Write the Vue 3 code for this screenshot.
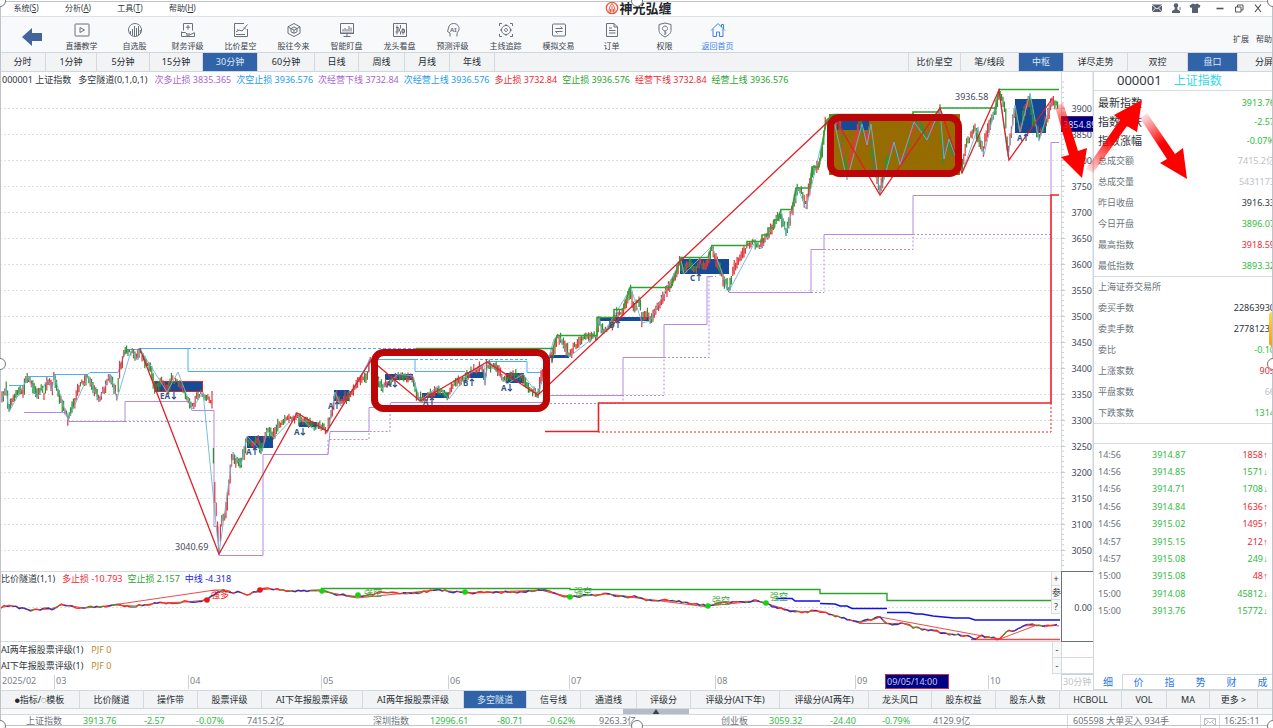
<script setup>
const menus = [['系统', 'S'], ['分析', 'A'], ['工具', 'T'], ['帮助', 'H']]

const tools = [
  { label: '直播教学', d: 'M1.5 2h13q.5 0 .5.5v11q0 .5-.5.5h-13q-.5 0-.5-.5v-11q0-.5.5-.5zM6 5.5v5l4.500-2.500z' },
  { label: '自选股', d: 'M8 1.500a6.500 6.500 0 1 0 .01 0M3.500 9v3M5.500 7v6.500M7.500 4v10M9.500 6v8M11.500 4v9M13.300 8v3.500' },
  { label: '财务评级', d: 'M3.500 8.500V1.500h9v7M8 3v4.500M5.800 5.200h4.400M1.500 9.500v5M1.500 14.500h13v-4M2 10.500h3.500l1.500 1.500h3M6 13l3 .3 5-2.500' },
  { label: '比价星空', d: 'M11 1.500H1.500v13h13V7M3 10l3-2 3 1 5.500-6.500M3 12.500h9M4 7.500l1.500 1M11 5.500l2 2' },
  { label: '股往今来', d: 'M8 1.500l6 3.300v6.500L8 14.500l-6-3.200V4.800zM8 5l3 1.600v3.200L8 11.300 5 9.800V6.600zM5 6.600l3 1.600 3-1.600M8 8.200v3M2 4.800l3 1.800M14 4.800l-3 1.800' },
  { label: '智能盯盘', d: 'M1.500 1.500h13v10h-13zM1.500 11h13M4.500 14.500h7M8 12v2.500M4 7v2.500M6 6v3.500M8 7v2.500M10 4v5.500M12 5.500v4' },
  { label: '龙头看盘', d: 'M1.500 1.500h13v13h-13zM5 3.500v9M4 5.500h2.500M6 5v5.500M8.500 3v3l-1.500 2 1.500 2v2.500M11 6v6.500M10 7.500h2.500v3H10zM3.500 10h2' },
  { label: '预测评级', d: 'M5 14.500v-3.500l-2.500-1.500L3.500 6C4 3 6 1.500 8.500 1.500c4 0 6 3 5.500 6-.3 2-2 3-2 4v3', text: 'AI' },
  { label: '主线追踪', d: 'M1.500 4V1.500H4M12 1.500h2.500V4M14.500 12v2.500H12M4 14.500H1.500V12M8 3.500a4.500 4.500 0 1 0 .01 0M8 6.500a1.500 1.500 0 1 0 .01 0M8 2v1.500M8 12.500V14M2 8h1.500M12.500 8H14' },
  { label: '模拟交易', d: 'M2.500 2h11q1 0 1 1v10q0 1-1 1h-11q-1 0-1-1V3q0-1 1-1zM4.500 6.500h7l-2-2M11.500 9.500h-7l2 2' },
  { label: '订单', d: 'M2.500 1.500h7.500l3.500 3.500v9.500h-11zM10 1.500V5h3.500M5 6h3M5 8.500h6.500M5 11h6.500' },
  { label: '权限', d: 'M8 1l6 1.500v6c0 3-3 5-6 6.500-3-1.500-6-3.500-6-6.500v-6zM8 4a2.500 2.500 0 1 0 .01 0M8 9v4M8 11h1.500' },
  { label: '返回首页', d: 'M1 8.500l7-7 7 7M11.500 5V2.500h2V7M3 7v7.500h3.500V10h3v4.500H13V7', home: true },
]

const periods = ['分时', '1分钟', '5分钟', '15分钟', '30分钟', '60分钟', '日线', '周线', '月线', '年线']
const views = ['比价星空', '笔/线段', '中枢', '详尽走势', '双控', '盘口', '分屏']

const mainLegend = [
  ['次多止损 3835.365', 'purple'], ['次空止损 3936.576', 'blue'], ['次经营下线 3732.84', 'purple'],
  ['次经营上线 3936.576', 'blue'], ['多止损 3732.84', 'red'], ['空止损 3936.576', 'green'],
  ['经营下线 3732.84', 'red'], ['经营上线 3936.576', 'green'],
]

const levels = Array.from({ length: 18 }, (_, i) => ({ label: 3900 - i * 50, y: 108 + i * 26 }))
const ticks = Array.from({ length: 94 }, (_, i) => 82 + i * 5.2)

const price = [
  [1, 402], [6, 388], [9, 408], [17, 392], [23, 392], [26, 378], [30, 378], [37, 396], [42, 387], [44, 396], [48, 380], [52, 390], [54, 376], [58, 392], [62, 403], [68, 419], [73, 407], [80, 384], [88, 378], [93, 387], [99, 399], [105, 387], [110, 376], [117, 396], [120, 367], [125, 352], [133, 352], [137, 358], [140, 351], [145, 363], [150, 366], [155, 389], [163, 381], [167, 390], [172, 380], [177, 381], [185, 392], [192, 407], [197, 397], [202, 393], [207, 398], [212, 400], [214, 480], [217, 523], [219, 550], [222, 517], [225, 517], [228, 497], [232, 457], [235, 460], [241, 463], [247, 440], [252, 445], [257, 440], [262, 449], [267, 430], [273, 437], [280, 423], [290, 418], [297, 417], [302, 422], [308, 423], [315, 427], [322, 427], [327, 430], [333, 410], [335, 393], [340, 400], [348, 397], [353, 390], [360, 379], [367, 380], [370, 361], [375, 373], [382, 387], [390, 383], [397, 376], [412, 378], [418, 398], [428, 397], [437, 388], [448, 396], [455, 383], [467, 377], [472, 370], [482, 367], [485, 381], [487, 364], [497, 368], [505, 381], [513, 374], [522, 376], [527, 387], [538, 394], [542, 374], [547, 358], [552, 357], [557, 338], [563, 341], [569, 355], [577, 343], [583, 337], [590, 339], [597, 335], [599, 320], [603, 332], [612, 323], [617, 313], [623, 313], [630, 290], [633, 307], [640, 302], [642, 320], [647, 312], [650, 319], [662, 300], [668, 287], [675, 277], [680, 262], [683, 271], [688, 263], [694, 270], [700, 263], [705, 268], [712, 249], [717, 263], [723, 278], [729, 289], [735, 265], [748, 245], [755, 243], [760, 246], [767, 237], [774, 226], [780, 213], [786, 231], [793, 207], [797, 190], [802, 192], [806, 205], [812, 173], [817, 168], [822, 153], [825, 124], [833, 119], [840, 123], [845, 160], [847, 174], [853, 147], [860, 124], [867, 140], [869, 125], [873, 160], [880, 191], [887, 160], [893, 144], [900, 160], [907, 153], [913, 124], [920, 127], [927, 138], [933, 123], [940, 112], [943, 155], [948, 142], [957, 165], [962, 169], [967, 143], [975, 128], [983, 151], [988, 130], [995, 110], [999, 93], [1005, 107], [1008, 155], [1012, 127], [1015, 110], [1020, 130], [1029, 97], [1033, 120], [1039, 136], [1047, 120], [1051, 101], [1057, 105],
]

const swings = '1,402 6,388 9,412 28,377 37,398 48,379 52,391 54,375 68,420 88,376 99,401 110,374 117,399 131,351 138,360 140,349 167,392 178,372 192,409 203,392 219,554 233,452 241,465 247,436 262,452 267,430 274,438 296,415 315,430 319,425 328,432 335,392 341,406 348,398 370,359 382,389 398,374 413,376 420,401 438,386 449,399 467,375 484,365 485,384 488,362 507,384 523,374 538,395 554,339 559,336 569,357 597,335 599,318 603,334 631,288 642,323 650,321 681,260 684,274 712,246 729,291 755,242 761,249 781,211 786,234 798,188 806,209 827,121 833,116 847,180 862,124 867,145 871,124 880,194 894,142 900,165 914,122 927,140 940,109 944,159 949,139 962,173 978,127 984,155 999,90 1008,157 1015,105 1020,132 1030,93 1039,141 1052,99'

function noise(seed) {
  let s = seed
  return () => {
    s = (s * 16807) % 2147483647
    return s / 2147483647
  }
}
function at(points, x) {
  for (let i = 1; i < points.length; i++) {
    const [x0, y0] = points[i - 1]
    const [x1, y1] = points[i]
    if (x <= x1) return y0 + ((y1 - y0) * (x - x0)) / (x1 - x0)
  }
  return points[points.length - 1][1]
}
function candles() {
  const rnd = noise(4711)
  const out = { up: '', down: '' }
  for (let x = 2; x < 1058; x += 1.4) {
    const mid = at(price, x) + (rnd() - 0.5) * 5
    const slope = at(price, x + 1) - at(price, x - 1)
    const side = rnd() < (slope < 0 ? 0.68 : 0.38) ? 'up' : 'down'
    const len = 2 + rnd() * 8 + Math.min(Math.abs(slope), 16) * 0.7
    out[side] += `M${x.toFixed(1)} ${(mid - len / 2).toFixed(1)}v${len.toFixed(1)}`
  }
  return out
}
const bars = candles()

const hubs = [
  [247, 436, 26, 12], [299, 422, 18, 5], [334, 390, 15, 11], [385, 374, 28, 6], [422, 393, 27, 5], [467, 372, 17, 6],
  [506, 373, 18, 10], [549, 355, 20, 3], [598, 317, 51, 4], [680, 259, 49, 15], [837, 121, 32, 9], [1015, 99, 31, 34],
]
const marks = [
  ['EA', 160, 399, 0], ['A', 246, 455, 1], ['A', 294, 435, 0], ['A', 328, 409, 1], ['A', 386, 387, 0], ['A', 423, 405, 1], ['B', 463, 386, 1],
  ['A', 501, 391, 0], ['B', 609, 328, 1], ['C', 690, 281, 1], ['A', 1017, 141, 1],
]
const arrowUp = (x, y) => `M${x} ${y}v-7M${x - 2} ${y - 5}l2-2 2 2`
const arrowDown = (x, y) => `M${x} ${y - 7}v7M${x - 2} ${y - 2}l2 2 2-2`
const markArrow = (m) => {
  const x = m[1] + m[0].length * 5 + 4
  return m[3] ? arrowUp(x, m[2]) : arrowDown(x, m[2])
}

const ratio = [
  [1, 608], [9, 605], [29, 610], [51, 609], [61, 605], [72, 606], [83, 608], [100, 607], [115, 605], [135, 606], [159, 603], [186, 602], [196, 601], [206, 600], [216, 594], [225, 590], [230, 591], [233, 594], [237, 591], [247, 595], [259, 590], [270, 589], [291, 591], [321, 591], [335, 594], [362, 597], [382, 592], [406, 594], [436, 590], [473, 593], [507, 592], [520, 592], [541, 590], [570, 597], [606, 594], [634, 597], [647, 600], [675, 601], [708, 606], [727, 602], [758, 601], [766, 603], [775, 607], [795, 612], [820, 611], [837, 616], [859, 623], [870, 620], [880, 617], [888, 624], [902, 623], [913, 627], [944, 633], [968, 636], [975, 639], [981, 636], [1000, 639], [1007, 631], [1014, 631], [1023, 626], [1040, 625], [1045, 627], [1052, 625], [1059, 626],
]
function ratioSegments() {
  const rnd = noise(99)
  const out = { red: '', blue: '', green: '' }
  let y = ratio[0][1]
  for (let x = 1; x < 1057; x += 3) {
    const next = at(ratio, x + 3) + (rnd() - 0.5) * 2.8
    const r = rnd()
    const key = r < 0.42 ? 'red' : r < 0.78 ? 'blue' : 'green'
    out[key] += `M${x} ${y.toFixed(1)}L${x + 3} ${next.toFixed(1)}`
    y = next
  }
  return out
}
const segs = ratioSegments()
const ratioBase = ratio.map((p) => p.join(',')).join(' ')
const dots = [
  [207, 600, 'hot'], [260, 590, 'hot'], [322, 591, 'cool'], [358, 595, 'cool'], [465, 592, 'cool'], [570, 597, 'cool'], [708, 606, 'cool'], [766, 603, 'cool'],
]
const dotLabels = [
  ['强多', 211, 598, 'hot'], ['强空', 364, 596, 'cool'], ['强空', 574, 595, 'cool'], ['强空', 712, 604, 'cool'], ['强空', 770, 600, 'cool'],
]

const ratings = ['AI两年报股票评级(1)', 'AI下年报股票评级(1)']
const months = [['2025/02', 1], ['03', 55], ['04', 189], ['05', 322], ['06', 449], ['07', 570], ['08', 716], ['09', 856], ['10', 989]]

const headline = [['最新指数', '3913.76', 'green'], ['指数涨跌', '-2.57', 'green'], ['指数涨幅', '-0.07%', 'green']]
const quotes = [
  ['总成交额', '7415.2亿', 'pale'], ['总成交量', '5431173', 'pale'], ['昨日收盘', '3916.33', 'dark'],
  ['今日开盘', '3896.07', 'green'], ['最高指数', '3918.59', 'red'], ['最低指数', '3893.32', 'green'],
]
const breadth = [
  ['上海证券交易所', '', 'dark'], ['委买手数', '22863930', 'dark'], ['委卖手数', '27781235', 'dark'], ['委比', '-0.10', 'green'],
  ['上涨家数', '905', 'red'], ['平盘家数', '66', 'pale'], ['下跌家数', '1314', 'green'],
]
const trades = [
  ['14:56', '3914.87', '1858', 1], ['14:56', '3914.85', '1571', 0], ['14:56', '3914.71', '1708', 0], ['14:56', '3914.84', '1636', 1],
  ['14:56', '3915.02', '1495', 1], ['14:57', '3915.15', '212', 1], ['14:57', '3915.08', '249', 0], ['15:00', '3915.08', '48', 1],
  ['15:00', '3914.08', '45812', 0], ['15:00', '3913.76', '15772', 0],
]
const sideTabs = ['细', '价', '指', '势', '财', '成']

const indicators = ['比价隧道', '操作带', '股票评级', 'AI下年报股票评级', 'AI两年报股票评级', '多空隧道', '信号线', '通道线', '评级分', '评级分(AI下年)', '评级分(AI两年)', '龙头风口', '股东权益', '股东人数', 'HCBOLL', 'VOL', 'MA', '更多 >']
const status = [
  ['上证指数', ''], ['3913.76', 'green'], ['-2.57', 'green'], ['-0.07%', 'green'], ['7415.2亿', ''],
  ['深圳指数', ''], ['12996.61', 'green'], ['-80.71', 'green'], ['-0.62%', 'green'], ['9263.3亿', ''],
  ['创业板', ''], ['3059.32', 'green'], ['-24.40', 'green'], ['-0.79%', 'green'], ['4129.9亿', ''],
]
</script>

<template>
  <div class="app">
    <header class="titlebar">
      <nav class="menus">
        <button v-for="m in menus" :key="m[1]" class="menu">{{ m[0] }}(<u>{{ m[1] }}</u>)</button>
      </nav>
      <div class="brand">
        <svg viewBox="0 0 14 14" width="14" height="14">
          <circle cx="7" cy="7" r="5.700" fill="none" stroke="#f0563f" stroke-width="1.300" />
          <path d="M7 2.500C5 5 4 7 4 10.500M7 2.500C9 5 10 7 10 10.500M7 5v6M5.500 8v3.500M8.500 8v3.500" fill="none" stroke="#f0563f" stroke-width="1" />
        </svg>
        <span>神光弘缠</span>
      </div>
      <div class="window-tools">
        <button aria-label="消息"><svg viewBox="0 0 12 12"><path d="M1 2.500h10v7.500H1z" fill="#566070" /><path d="M1 3l5 4 5-4M1 10l3.500-4M11 10L7.500 6" fill="none" stroke="#fff" stroke-width=".8" /></svg></button>
        <button aria-label="用户"><svg viewBox="0 0 12 12"><circle cx="6" cy="3.500" r="2.300" fill="#566070" /><path d="M5 5h2l.5 2.500L10 9v2H2V9l2.500-1.500z" fill="#566070" /><path d="M10 5v3" stroke="#566070" stroke-width=".8" /></svg></button>
        <button aria-label="皮肤"><svg viewBox="0 0 12 12"><path d="M4 1.500q2 1.500 4 0L11.500 3.500 10.300 6 9 5.500V11H3V5.500L1.700 6 .5 3.500z" fill="#566070" /></svg></button>
        <button aria-label="最小化" class="first-control"><svg viewBox="0 0 12 12"><path d="M2.500 6.500h7" stroke="#555" stroke-width="1.600" /></svg></button>
        <button aria-label="还原"><svg viewBox="0 0 12 12"><path d="M2.500 5h5.500v5H2.500zM4.500 5V3h5.500v5H8" fill="none" stroke="#555" /></svg></button>
        <button aria-label="关闭"><svg viewBox="0 0 12 12"><path d="M3 2.500l6 7.500M9 2.500L3 10" fill="none" stroke="#444" stroke-width="1.100" /></svg></button>
      </div>
    </header>

    <div class="toolbar">
      <button class="back" aria-label="返回">
        <svg viewBox="0 0 22 18" width="22" height="18"><path d="M1 9L11 0v5h10v8H11v5z" fill="#43659b" /></svg>
      </button>
      <button v-for="t in tools" :key="t.label" class="tool" :class="{ home: t.home }">
        <svg viewBox="0 0 16 16" width="16" height="16">
          <path :d="t.d" fill="none" stroke="currentColor" />
          <text v-if="t.text" x="5" y="9.500" font-size="6" font-weight="700" fill="currentColor">{{ t.text }}</text>
        </svg>
        <span>{{ t.label }}</span>
      </button>
      <div class="extras"><button>扩展</button><button>帮助</button></div>
    </div>

    <div class="periodbar">
      <button v-for="p in periods" :key="p" class="tab" :class="{ active: p === '30分钟' }">{{ p }}</button>
      <span class="gap"></span>
      <button v-for="v in views" :key="v" class="tab" :class="{ active: v === '中枢' || v === '盘口' }">{{ v }}</button>
    </div>

    <main class="main">
      <section class="charts">
        <div class="plot">
          <div class="legend">
            <span>000001 上证指数</span><span class="name">多空隧道(0,1,0,1)</span>
            <span v-for="l in mainLegend" :key="l[0]" :class="l[1]">{{ l[0] }}</span>
          </div>
          <svg viewBox="0 72 1093 499" class="canvas">
            <g stroke="#dcdfe3" stroke-dasharray="2 2" fill="none">
              <path v-for="l in levels" :key="l.y" :d="`M0 ${l.y + 0.5}H1061`" />
            </g>
            <path d="M1061.500 72V571M1093 72V571" stroke="#d3d9de" />
            <path v-for="y in ticks" :key="y" :d="`M1062 ${y}h2`" stroke="#c4ccd2" />
            <g class="axis">
              <g v-for="l in levels" :key="l.label">
                <path :d="`M1061 ${l.y + 0.5}h4`" stroke="#c4ccd2" />
                <text x="1092" :y="l.y + 4" text-anchor="end">{{ l.label }}</text>
              </g>
            </g>
            <rect x="829" y="114" width="131" height="61" fill="#966c00" />
            <rect x="154.500" y="381.500" width="48" height="10" fill="#174a95" stroke="#e0222a" />
            <rect v-for="h in hubs" :key="h.join()" :x="h[0]" :y="h[1]" :width="h[2]" :height="h[3]" fill="#174a95" />

            <g fill="none" stroke="#b48ae0">
              <path d="M24 412.500H67L69 421.500H125V401.500H189L192 410.500H214V526.500H218L219 555.500H263V454.500H328L330 431.500H369V407.500H389L391 402.500H546M546 395.500H623V357.500H664V324.500H707V276.500H712M723 280L729 292.500H811V249.500H824V234.500H913V195.500H1051V142.500H1059" />
              <path stroke-dasharray="2 2" d="M125 421.500H213M328 454V439.500H369V431.500H390V403.500M546 403.500H623V395.500H664V357.500H709V276.500H716M811 292.500H824V249.500H913V234.500H1051" />
            </g>
            <g fill="none" stroke="#4aaef8">
              <path d="M9 385.500H24L28 376.500H53L54 374.500H88L90 372.500H118L126 349.500H140V348.500H188V371.500H369V359.500H415V371.500H465M487 361.500H527V372.500H541" />
              <path stroke-dasharray="3 2" d="M188 348.500H416M415 359.500H527" />
            </g>
            <path :d="bars.up" stroke="#e03a3c" stroke-width="1.200" />
            <path :d="bars.down" stroke="#2f9134" stroke-width="1.200" />
            <polyline :points="swings" fill="none" stroke="#6cb4d8" stroke-width=".9" />
            <g fill="none" stroke="#2da32d" stroke-width="1.600">
              <path d="M416 348.500H553L557 335.500H597V317.500H614V309.500H623L630 287.500H671L681 257.500H708L712 245.500H747V241.500H762V235H768V228H774V220H778L781 209.500H792L796 188H810L812 167H819L826 121L833 114.500H913V112H938L940 108H996L999 89.500H1059" />
            </g>
            <g fill="none" stroke="#ee2027">
              <path stroke-width="1.600" d="M545 431.500H598.500V403H1051V195H1059" />
              <path stroke-dasharray="2 2" d="M598 432H1051V403" />
            </g>
            <polyline fill="none" stroke="#e01f26" stroke-width="1.300" points="140,349 219,554 297,413 327,431 371,360 420,401 487,362 538,395 833,117 837,122 880,195 940,108 962,173 999,90 1009,160 1052,99" />
            <g class="mark">
              <template v-for="m in marks" :key="m.join()">
                <text :x="m[1]" :y="m[2]">{{ m[0] }}</text>
                <path :d="markArrow(m)" fill="none" stroke="#33558c" stroke-width="1.200" />
              </template>
              <path d="M552 363v-7M550 358l2-2 2 2" fill="none" stroke="#33558c" stroke-width="1.200" />
            </g>
            <g class="axis">
              <text x="175" y="550">3040.69</text>
              <text x="955" y="100">3936.58</text>
              <rect x="1061.500" y="116.500" width="32" height="15" fill="#000084" stroke="#5b2460" />
              <text x="1063" y="128" class="cursor-price">3854.89</text>
            </g>
            <g fill="none" stroke="#bd0505" stroke-width="7">
              <rect x="374.500" y="352.500" width="172" height="56" rx="9" />
              <rect x="830.500" y="117.500" width="128" height="56" rx="9" />
            </g>
          </svg>
        </div>

        <div class="plot ratio">
          <div class="legend">
            <span class="name">比价隧道(1,1)</span><span class="red">多止损 -10.793</span><span class="green">空止损 2.157</span><span class="navy">中线 -4.318</span>
          </div>
          <svg viewBox="0 571 1093 71" class="canvas">
            <path d="M0 571.500H1061M0 641.500H1061" stroke="#d3d9de" />
            <path d="M0 607.500H1061" stroke="#dcdfe3" stroke-dasharray="2 2" />
            <rect x="1061.500" y="571.500" width="33" height="70" fill="none" stroke="#69717d" />
            <text x="1092" y="611" text-anchor="end" class="axis-zero">0.00</text>
            <g fill="none" stroke="#f04a4a">
              <path d="M99 607L215 590L225 590M322 591L357 598L436 590M465 593L541 590L570 598M606 594L708 607M708 606L758 601L795 612M870 621L880 617L999 639M859 623.500H892M1000 639L1037 625" />
              <path stroke-width="1.600" d="M971 639.500H1060" />
              <polyline :points="ratioBase" />
            </g>
            <g fill="none" stroke-width="1.400">
              <path :d="segs.red" stroke="#ee3028" />
              <path :d="segs.blue" stroke="#3432b0" />
              <path :d="segs.green" stroke="#5e8232" />
              <path d="M321 588.500H570V589.500H820V593.500H887V600.500H1060" stroke="#2da32d" />
              <path stroke="#1010f0" stroke-width="1.600" d="M776 598.500H792L795 601H820M820 603.500L835 604L840 606H847L852 608.500H887M887 612.500H909L916 614H922L933 616L954 618H969L975 620H1060" />
            </g>
            <g v-for="d in dots" :key="d[0]" :class="d[2]"><circle :cx="d[0]" :cy="d[1]" r="2.800" /></g>
            <text v-for="d in dotLabels" :key="d[1]" :x="d[1]" :y="d[2]" class="dot-label" :class="d[3]">{{ d[0] }}</text>
          </svg>
          <div class="panel-buttons"><button>+</button><button>参</button><button>?</button></div>
        </div>

        <div v-for="r in ratings" :key="r" class="rating">
          <span>{{ r }}</span><span class="gold">PJF 0</span>
          <button class="collapse">-</button><i></i>
        </div>

        <div class="dates">
          <svg viewBox="0 674 1093 16" class="canvas">
            <g class="month">
              <template v-for="(m, i) in months" :key="m[0]">
                <path v-if="i" :d="`M${m[1] - 0.5} 675v14`" stroke="#ccd3d8" />
                <text :x="m[1] + 1" y="684">{{ m[0] }}</text>
              </template>
            </g>
            <rect x="885.500" y="674.500" width="63" height="14" fill="#000084" stroke="#c03048" />
            <text x="887" y="685" class="picked">09/05/14:00</text>
            <path d="M1061.500 674V690M1061 674.500h32" stroke="#ccd3d8" />
            <text x="1063" y="685" class="interval">30分钟</text>
          </svg>
        </div>
      </section>

      <aside class="quote">
        <h2><span>000001</span><span class="title">上证指数</span></h2>
        <dl class="headline">
          <div v-for="q in headline" :key="q[0]"><dt>{{ q[0] }}</dt><dd :class="q[2]">{{ q[1] }}</dd></div>
        </dl>
        <dl class="rows">
          <div v-for="q in quotes" :key="q[0]"><dt>{{ q[0] }}</dt><dd :class="q[2]">{{ q[1] }}</dd></div>
        </dl>
        <dl class="rows ruled">
          <div v-for="q in breadth" :key="q[0]"><dt>{{ q[0] }}</dt><dd :class="q[2]">{{ q[1] }}</dd></div>
        </dl>
        <div class="spacer-row"></div>
        <table class="trades">
          <tbody>
            <tr v-for="(t, i) in trades" :key="i">
              <td>{{ t[0] }}</td><td class="green">{{ t[1] }}</td>
              <td :class="t[3] ? 'red' : 'green'">{{ t[2] }}<span class="dir">{{ t[3] ? '↑' : '↓' }}</span></td>
            </tr>
          </tbody>
        </table>
        <div class="side-tabs">
          <button v-for="s in sideTabs" :key="s">{{ s }}</button>
        </div>
        <span class="side-handle"></span>
      </aside>

      <svg class="trend-arrows" viewBox="1050 90 150 100" width="150" height="100">
        <defs>
          <linearGradient id="fade-a" gradientUnits="userSpaceOnUse" x1="1058" y1="102" x2="1073" y2="150"><stop offset="0" stop-color="#f00" stop-opacity=".15" /><stop offset=".6" stop-color="#f00" /></linearGradient>
          <linearGradient id="fade-b" gradientUnits="userSpaceOnUse" x1="1089" y1="172" x2="1122" y2="124"><stop offset="0" stop-color="#f00" stop-opacity=".1" /><stop offset=".7" stop-color="#f00" /></linearGradient>
          <linearGradient id="fade-c" gradientUnits="userSpaceOnUse" x1="1143" y1="115" x2="1170" y2="156"><stop offset="0" stop-color="#f00" stop-opacity=".1" /><stop offset=".7" stop-color="#f00" /></linearGradient>
        </defs>
        <path d="M1055 106l8-3L1078 151l9-3-5 30-21-21 8-2z" fill="url(#fade-a)" />
        <path d="M1086 169l7 4L1127 126l10 6L1142 100l-28 15 6 5z" fill="url(#fade-b)" />
        <path d="M1140 118l7-5L1175 154l8-6 4 31-27-16 7-4z" fill="url(#fade-c)" />
      </svg>
    </main>

    <div class="indicators">
      <button class="tab"><span class="bullet">●</span>指标/<span class="bullet">○</span>模板</button>
      <button v-for="n in indicators" :key="n" class="tab" :class="{ active: n === '多空隧道' }">{{ n }}</button>
    </div>
    <div class="drawer">
      <button aria-label="展开"><svg viewBox="0 0 8 6" width="8" height="5"><path d="M4 0l4 6H0z" fill="#3c434a" /></svg></button>
    </div>
    <footer class="status">
      <div class="markets"><span v-for="(s, i) in status" :key="i" :class="s[1]">{{ s[0] }}</span></div>
      <span class="flash">605598 大单买入 934手</span>
      <span class="mail"><svg viewBox="0 0 12 8" width="12" height="8"><path d="M.5.5h11v7H.5zM.5.500L6 5 11.500.500M.5 7.500l4-4M11.500 7.500l-4-4" fill="none" stroke="#b5bdc4" /></svg></span>
      <time>16:25:11</time>
    </footer>

    <div class="frame">
      <i class="h tl"></i><i class="h tc"></i><i class="h tr"></i><i class="h ml"></i><i class="h mr"></i><i class="h bl"></i><i class="h bc"></i><i class="h br"></i>
    </div>
  </div>
</template>

<style>
body { margin: 0; background: #fff; }
</style>

<style scoped>
.app {
  position: relative;
  overflow: hidden;
  background: #fff;
  color: #30363d;
  font: 9px/12px "Noto Sans", "Noto Sans CJK SC", sans-serif;
}
.app *, .app *::before { box-sizing: border-box; }
button {
  margin: 0;
  padding: 0;
  border: 0;
  background: none;
  color: inherit;
  font: inherit;
  white-space: nowrap;
}
svg { display: block; }
.red { color: #ee2a33; }
.green { color: #30bc42; }
.blue { color: #1d9bf0; }
.purple { color: #a866cc; }
.navy { color: #2424e8; }
.gold { color: #b58a2c; }
.pale { color: #bdbfc4; }
.dark { color: #30363d; }

.titlebar {
  display: grid;
  grid-template-columns: 1fr auto 1fr;
  align-items: center;
  height: 17px;
  border-bottom: 1px solid #dde1e4;
}
.menus { display: flex; gap: 26px; padding-left: 13px; font-size: 8px; }
.menu { width: 26px; }
.brand { display: flex; align-items: center; color: #20252c; font-size: 13px; font-weight: 700; line-height: 14px; }
.brand svg { margin-left: 4px; }
.window-tools { display: flex; justify-content: flex-end; gap: 7px; padding-right: 9px; }
.window-tools svg { width: 12px; height: 12px; }
.window-tools .first-control { margin-left: 6px; }

.toolbar {
  display: flex;
  height: 36px;
  background: #f7f9fa;
  border-bottom: 1px solid #cfd6dc;
  color: #3e454d;
}
.back { display: grid; place-items: center; width: 55px; padding: 4px 0 0 8px; }
.tool {
  display: flex;
  flex-direction: column;
  align-items: center;
  gap: 2px;
  width: 53px;
  padding-top: 5px;
  font-size: 8px;
}
.tool svg { color: #6a717b; }
.tool.home, .tool.home svg { color: #3f83ea; }
.extras { display: flex; gap: 7px; margin-left: auto; padding: 9px 1px 0 0; font-size: 8px; }

.periodbar {
  display: grid;
  grid-template-columns: 46fr 51fr 53fr 53fr 55fr 57fr 44fr 46fr 45fr 45fr 414fr 52fr 58fr 45fr 64fr 60fr 50fr 53fr;
  width: calc(100% + 18px);
  height: 19px;
  background: #f1f3f4;
  border-bottom: 1px solid #cfd6dc;
}
.tab { overflow: hidden; border-right: 1px solid #d3d9de; color: #262b31; }
.tab.active { background: #3163a9; color: #dce8f8; }
.gap { border-right: 1px solid #d3d9de; }

.main { position: relative; display: flex; }
.charts { flex: 1; min-width: 0; }
.plot { position: relative; }
.canvas { width: 100%; height: auto; }
.legend { position: absolute; z-index: 1; top: 2px; left: 2px; display: flex; gap: 5px; white-space: nowrap; }
.legend .name { margin-right: 2px; }
.plot:first-child .legend .name { margin-left: 2px; }
.legend .green { color: #2ca52c; }
.ratio .legend { left: 1px; }
.axis text, .axis-zero { fill: #444b59; font-size: 9px; }
.axis .cursor-price { fill: #d8dcf4; }
.mark text { fill: #33558c; font-size: 8px; font-weight: 700; }
.hot { fill: #e81616; }
.cool { fill: #12d412; }
.dot-label { font-size: 9px; }
.dot-label.cool { fill: #35a435; }
.panel-buttons { position: absolute; top: 1px; right: 33px; display: flex; flex-direction: column; }
.panel-buttons button, .collapse {
  width: 9px;
  height: 14px;
  background: #f7f8f8;
  border: 1px solid #d9dde0;
  border-width: 0 0 1px 1px;
  font-size: 9px;
  line-height: 12px;
}
.rating { display: flex; gap: 8px; height: 16px; padding-left: 1px; line-height: 16px; }
.rating .collapse { width: 9px; margin-left: auto; height: 16px; }
.rating i { width: 32px; margin-left: -8px; border: 1px solid #d3d9de; border-width: 0 0 1px 1px; }
.month text { fill: #7c838b; font-size: 9px; }
.picked { fill: #c4c8e8; font-size: 9px; }
.interval { fill: #c0c3c7; font-size: 9px; }

.quote {
  position: relative;
  display: flex;
  flex-direction: column;
  width: 180px;
  border-left: 1px solid #cfd6dc;
}
h2 {
  display: flex;
  gap: 12px;
  height: 19px;
  margin: 0;
  padding-left: 23px;
  border-bottom: 1px solid #d7dce0;
  font-size: 13px;
  font-weight: 400;
  line-height: 17px;
}
h2 .title { color: #35d8ec; font-size: 12px; }
dl { margin: 0; padding: 0 0 0 4px; color: #6c737b; }
dl div { display: flex; justify-content: space-between; height: 21px; margin-right: -2px; line-height: 21px; white-space: nowrap; }
dd { margin: 0; }
.headline { padding-top: 2px; color: #30363d; }
.headline div { height: 19px; line-height: 19px; }
.headline dt { font-size: 11px; }
.ruled { border-top: 1px solid #d7dce0; }
.ruled div:first-child { height: 20px; line-height: 20px; }
.spacer-row { height: 21px; border: 1px solid #d7dce0; border-width: 1px 0; }
.trades { width: 100%; height: 174px; margin-top: 2px; border-collapse: collapse; color: #6c737b; }
td { padding: 0; line-height: 12px; }
td:first-child { width: 58px; padding-left: 4px; }
td:last-child { padding-right: 5px; text-align: right; }
.dir { display: inline-block; width: 5px; font-family: "Liberation Sans", sans-serif; text-align: center; }
.trades .green { color: #30bc42; }
.trades .red { color: #ee2a33; }
.side-tabs { display: flex; height: 16px; margin-top: auto; overflow: hidden; border-bottom: 1px solid #cfd6dc; color: #2b78e0; font-size: 10px; }
.side-tabs button { flex: 0 0 31px; border-top: 1px solid #cfd6dc; line-height: 14px; }
.side-tabs button:first-child { flex-basis: 29px; border-top: 0; border-right: 1px solid #cfd6dc; }
.side-handle {
  position: absolute;
  top: 240px;
  right: 0;
  width: 4px;
  height: 34px;
  border-radius: 3px 0 0 3px;
  background: linear-gradient(#ffd84a, #f99b12);
}
.trend-arrows { position: absolute; z-index: 2; top: 18px; right: 73px; }

.indicators {
  display: grid;
  grid-template-columns: 80fr 64fr 54fr 64fr 101fr 101fr 63fr 54fr 56fr 54fr 89fr 89fr 63fr 64fr 64fr 62fr 45fr 43fr 48fr 15fr;
  height: 19px;
  background: #f1f3f4;
  border: 1px solid #d3d9de;
  border-width: 1px 0;
}
.bullet { display: inline-block; font-size: 5px; vertical-align: 1px; line-height: 8px; }
.drawer { display: flex; justify-content: center; height: 5px; background: #f8f9f9; padding-left: 39px; }
.drawer button { display: grid; place-items: center; width: 66px; height: 5px; background: #b4bdc6; }
.status { display: flex; height: 14px; border-top: 1px solid #d3d9de; color: #6c737b; line-height: 12px; white-space: nowrap; }
.markets {
  flex: 1;
  display: grid;
  grid-template-columns: 57fr 61fr 52fr 51fr 126fr 57fr 67fr 50fr 52fr 122fr 48fr 61fr 52fr 51fr 134fr;
  padding-left: 26px;
}
.markets span { min-width: 0; }
.flash { width: 133px; padding-left: 5px; border-left: 1px solid #d3d9de; }
.mail { display: grid; place-items: center; width: 20px; border: 1px solid #d3d9de; border-width: 0 1px; }
time { width: 53px; padding-left: 4px; }

.frame { position: absolute; z-index: 3; inset: 1px 0 2px 0; border: 1px solid #bfc4ca; pointer-events: none; }
.h { position: absolute; width: 12px; height: 12px; border: 1px solid #777; border-radius: 50%; background: #fff; }
.tl { top: -7px; left: -7px; }
.tc { top: -7px; left: calc(50% - 6px); }
.tr { top: -7px; right: -7px; }
.ml { top: calc(50% - 6px); left: -7px; }
.mr { top: calc(50% - 6px); right: -7px; }
.bl { bottom: -7px; left: -7px; }
.bc { bottom: -7px; left: calc(50% - 6px); }
.br { bottom: -7px; right: -7px; }
</style>
